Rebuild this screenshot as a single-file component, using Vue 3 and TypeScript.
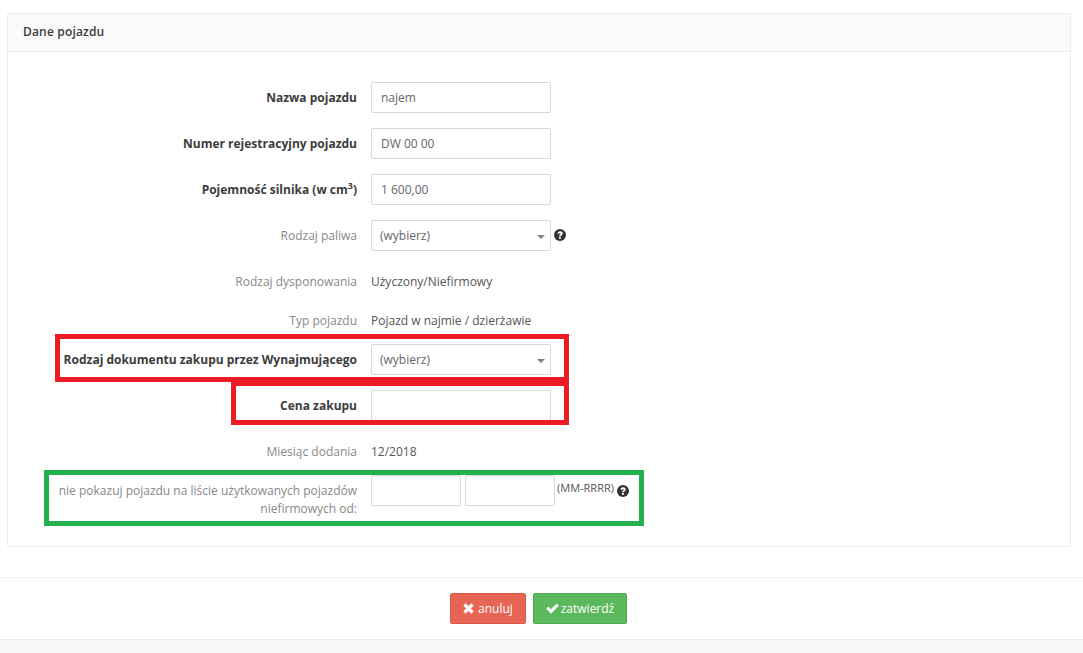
<script setup lang="ts">
interface Row { label: string; value?: string; kind: 'input' | 'select' | 'static'; bold?: boolean; help?: boolean }
const rows: Row[] = [
  { label: 'Nazwa pojazdu', value: 'najem', kind: 'input', bold: true },
  { label: 'Numer rejestracyjny pojazdu', value: 'DW 00 00', kind: 'input', bold: true },
  { label: 'Pojemność silnika (w cm³)', value: '1 600,00', kind: 'input', bold: true },
  { label: 'Rodzaj paliwa', value: '(wybierz)', kind: 'select', help: true },
  { label: 'Rodzaj dysponowania', value: 'Użyczony/Niefirmowy', kind: 'static' },
  { label: 'Typ pojazdu', value: 'Pojazd w najmie / dzierżawie', kind: 'static' },
  { label: 'Rodzaj dokumentu zakupu przez Wynajmującego', value: '(wybierz)', kind: 'select', bold: true },
  { label: 'Cena zakupu', value: '', kind: 'input', bold: true },
  { label: 'Miesiąc dodania', value: '12/2018', kind: 'static' },
]
</script>

<template>
  <div class="page">
    <section class="panel">
      <header class="panel-head">Dane pojazdu</header>
      <div class="panel-body">
        <div v-for="r in rows" :key="r.label" class="row" :class="{ 'row-static': r.kind === 'static' }">
          <div class="label" :class="{ bold: r.bold }">
            <template v-if="r.label.includes('³')">Pojemność silnika (w cm<sup>3</sup>)</template>
            <template v-else>{{ r.label }}</template>
          </div>
          <div v-if="r.kind === 'input'" class="field">{{ r.value }}</div>
          <div v-else-if="r.kind === 'select'" class="field select">{{ r.value }}<span class="caret"></span></div>
          <div v-else class="static">{{ r.value }}</div>
          <svg v-if="r.help" class="help help-select" viewBox="0 0 12 12">
            <circle cx="6" cy="6" r="6" fill="#333" />
            <path d="M3.4 4.5C3.6 3 4.7 2.3 6.1 2.3c1.5 0 2.6.9 2.6 2.1 0 1.9-1.8 1.7-1.8 2.9H5c0-2 1.7-1.9 1.7-2.8 0-.4-.3-.6-.7-.6-.4 0-.7.3-.8.8zM5 8h1.9v1.8H5z" fill="#fff" />
          </svg>
        </div>
        <div class="row row-last">
          <div class="label label-wrap">nie pokazuj pojazdu na liście użytkowanych pojazdów niefirmowych od:</div>
          <div class="field short"></div>
          <div class="field short second"></div>
          <span class="hint">(MM-RRRR)</span>
          <svg class="help help-hint" viewBox="0 0 12 12">
            <circle cx="6" cy="6" r="6" fill="#333" />
            <path d="M3.4 4.5C3.6 3 4.7 2.3 6.1 2.3c1.5 0 2.6.9 2.6 2.1 0 1.9-1.8 1.7-1.8 2.9H5c0-2 1.7-1.9 1.7-2.8 0-.4-.3-.6-.7-.6-.4 0-.7.3-.8.8zM5 8h1.9v1.8H5z" fill="#fff" />
          </svg>
        </div>
      </div>
    </section>

    <footer class="actions">
      <button class="btn btn-cancel" type="button">
        <svg class="icon-x" viewBox="0 0 12 12"><path d="M.6 3 3 .6 6 3.6 9 .6 11.4 3 8.4 6 11.4 9 9 11.4 6 8.4 3 11.4.6 9 3.6 6z" fill="#fff" stroke="#fff" stroke-width=".5" stroke-linejoin="round" /></svg>
        anuluj
      </button>
      <button class="btn btn-ok" type="button">
        <svg class="icon-check" viewBox="0 0 13 11"><path d="M.4 5.8 2.4 3.8 5 6.4 10.6.8 12.6 2.8 5 10.4z" fill="#fff" stroke="#fff" stroke-width=".3" stroke-linejoin="round" /></svg>
        zatwierdź
      </button>
    </footer>
    <div class="bottom-strip"></div>

    <div class="mark red mark-a"></div>
    <div class="mark red mark-b"></div>
    <div class="mark green mark-c"></div>
  </div>
</template>

<style>
html, body { margin: 0; background: #fff; }
</style>

<style scoped>
.page {
  position: relative;
  width: 1083px;
  height: 653px;
  overflow: hidden;
  padding-top: 13px;
  box-sizing: border-box;
  font-family: "Open Sans", sans-serif;
  font-size: 12px;
  color: #555;
  background: #fff;
}
.panel {
  width: 1064px;
  height: 534px;
  margin-left: 7px;
  box-sizing: border-box;
  border: 1px solid #eaecee;
  border-radius: 2px;
}
.panel-head {
  height: 37px;
  line-height: 36px;
  padding-left: 15px;
  background: #f9fafb;
  border-bottom: 1px solid #e9ebee;
  color: #3c3c3c;
  font-weight: 600;
  font-size: 12px;
  letter-spacing: 0.17px;
}
.panel-body {
  padding-top: 30px;
}
.row {
  display: flex;
  align-items: flex-start;
  margin-bottom: 15px;
  min-height: 31px;
}
.row-static {
  margin-bottom: 8px;
}
.label {
  width: 349px;
  flex: none;
  margin-right: 14px;
  text-align: right;
  line-height: 17px;
  padding-top: 7px;
  color: #888;
}
.label.bold {
  color: #3c3c3c;
  font-weight: 700;
}
.label sup {
  font-size: 9px;
  line-height: 0;
}
.label-wrap {
  line-height: 18px;
  padding-left: 30px;
  box-sizing: border-box;
  width: 349px;
}
.field {
  position: relative;
  width: 180px;
  height: 31px;
  box-sizing: border-box;
  border: 1px solid #d9d9d9;
  border-radius: 2px;
  padding: 0 9px;
  line-height: 29px;
  color: #666;
  background: #fff;
  flex: none;
}
.select {
  padding-left: 8px;
}
.caret {
  position: absolute;
  right: 5px;
  top: 14px;
  border-left: 4px solid transparent;
  border-right: 4px solid transparent;
  border-top: 4px solid #808080;
}
.static {
  line-height: 17px;
  padding-top: 7px;
  color: #555;
}
.help {
  display: block;
  width: 12px;
  height: 12px;
  flex: none;
}
.help-select {
  margin: 9px 0 0 3px;
}
.help-hint {
  margin: 10px 0 0 3px;
}
.short {
  width: 90px;
}
.second {
  margin-left: 4px;
}
.hint {
  margin: 6px 0 0 2px;
  font-size: 11px;
  line-height: 14px;
  color: #555;
}
.row-last {
  margin-bottom: 0;
}
.actions {
  margin-top: 30px;
  height: 46px;
  border-top: 1px solid #eeeff1;
  display: flex;
  justify-content: center;
  align-items: flex-start;
  padding: 15px 6px 0 0;
  gap: 7px;
}
.btn {
  height: 31px;
  display: inline-flex;
  align-items: center;
  justify-content: center;
  border-radius: 2px;
  font-family: inherit;
  font-size: 12px;
  font-weight: 400;
  color: #fff;
  padding: 0;
  box-sizing: border-box;
}
.btn-cancel {
  width: 76px;
  gap: 4px;
  background: #e76554;
  border: 1px solid #d75a4b;
}
.btn-ok {
  width: 94px;
  gap: 2px;
  background: #5cb85c;
  border: 1px solid #4fa94f;
}
.icon-x {
  width: 11px;
  height: 11px;
}
.icon-check {
  width: 13px;
  height: 11px;
}
.bottom-strip {
  height: 14px;
  background: #f6f7f9;
  border-top: 1px solid #e9ebee;
}
.mark {
  position: absolute;
  box-sizing: border-box;
  pointer-events: none;
}
.red {
  border: 5px solid #ed1c24;
}
.green {
  border: 5px solid #22b14c;
}
.mark-a {
  left: 55px;
  top: 334px;
  width: 514px;
  height: 48px;
}
.mark-b {
  left: 231px;
  top: 381px;
  width: 338px;
  height: 44px;
}
.mark-c {
  left: 44px;
  top: 470px;
  width: 600px;
  height: 56px;
}
</style>
